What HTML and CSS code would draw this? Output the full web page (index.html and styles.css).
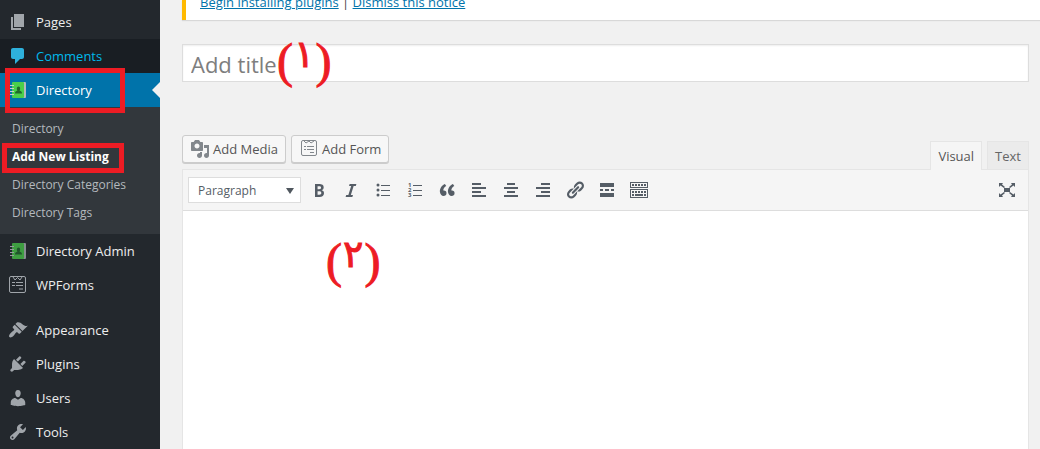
FILE: index.html
```html
<!DOCTYPE html>
<html lang="en">
<head>
    <meta charset="UTF-8">
    <title>Add New Listing</title>
    <link rel="stylesheet" href="styles.css">
</head>
<body>
    <nav id="menu">
        <ul class="main">
            <li><a href="#"><svg viewBox="0 0 20 20"><path d="M6 15V2h10v13H6zm-1 1h8v2H3V5h2v11z"/></svg>Pages</a></li>
            <li class="hover"><a href="#"><svg viewBox="0 0 20 20"><path d="M5 2h9c1.1 0 2 .9 2 2v7c0 1.1-.9 2-2 2h-2l-5 5v-5H5c-1.1 0-2-.9-2-2V4c0-1.1.9-2 2-2z"/></svg>Comments</a></li>
            <li class="current">
                <a href="#" class="marked"><svg viewBox="0 0 20 20" class="book"><path class="back" d="M6 2h11q1 0 1 1v14q0 1-1 1H6z"/><path class="cover" d="M5 2h10q1 0 1 1v14q0 1-1 1H5q-1 0-1-1V3q0-1 1-1z"/><path class="rings" d="M2 5.5h4M2 8.500h4M2 11.500h4M2 14.500h4"/><path class="person" d="M7 13.500c0-2 1-2.500 2.500-3-1-1-1-4 1-4s2 3 1 4c1.500.5 2.500 1 2.500 3z"/></svg>Directory</a>
                <ul class="sub">
                    <li><a href="#">Directory</a></li>
                    <li><a href="#" class="on marked">Add New Listing</a></li>
                    <li><a href="#">Directory Categories</a></li>
                    <li><a href="#">Directory Tags</a></li>
                </ul>
            </li>
            <li><a href="#"><svg viewBox="0 0 20 20" class="book dim"><path class="back" d="M6 2h11q1 0 1 1v14q0 1-1 1H6z"/><path class="cover" d="M5 2h10q1 0 1 1v14q0 1-1 1H5q-1 0-1-1V3q0-1 1-1z"/><path class="rings" d="M2 5.5h4M2 8.500h4M2 11.500h4M2 14.500h4"/><path class="person" d="M7 13.500c0-2 1-2.500 2.500-3-1-1-1-4 1-4s2 3 1 4c1.500.5 2.500 1 2.500 3z"/></svg>Directory Admin</a></li>
            <li><a href="#"><svg viewBox="0 0 20 20" class="form"><rect x="1.5" y="1.5" width="16" height="16" rx="1.5"/><path d="M5 2l2 3 2.500-2.500L12 5l2-3M4 7.500h3M8 7.500h7M4 10.500h3M8 10.500h7M11 14h4"/></svg>WPForms</a></li>
            <li class="group"><a href="#"><svg viewBox="0 0 20 20"><path d="M14.48 11.06L7.41 3.99l1.5-1.5c.5-.56 2.3-.47 3.51.32 1.21.8 1.43 1.28 2.91 2.1 1.18.64 2.45 1.26 4.45.85zm-.71.71L6.7 4.7 4.93 6.47c-.39.39-.39 1.02 0 1.41l1.06 1.06c.39.39.39 1.03 0 1.42-.6.6-1.43 1.11-2.21 1.69-.35.26-.7.53-1.01.84C1.43 14.23.4 16.08 1.4 17.07c.99 1 2.84-.03 4.18-1.36.31-.31.58-.66.85-1.02.57-.78 1.08-1.61 1.69-2.21.39-.39 1.02-.39 1.41 0l1.06 1.06c.39.39 1.02.39 1.41 0z"/></svg>Appearance</a></li>
            <li><a href="#"><svg viewBox="0 0 20 20"><path d="M13.11 4.36L9.87 7.6 8 5.73l3.24-3.24c.35-.34 1.05-.2 1.56.32.52.51.66 1.21.31 1.55zm-8 1.77l.91-1.12 9.01 9.01-1.19.84c-.71.71-2.63 1.16-3.82 1.16H6.14L4.9 17.26c-.59.59-1.54.59-2.12 0-.59-.58-.59-1.53 0-2.12l1.24-1.24v-3.88c0-1.13.4-3.19 1.09-3.89zm7.26 3.97l3.24-3.24c.34-.35 1.04-.21 1.55.31.52.51.66 1.21.31 1.55l-3.24 3.25z"/></svg>Plugins</a></li>
            <li><a href="#"><svg viewBox="0 0 20 20"><path d="M10 9.25c-2.27 0-2.73-3.44-2.73-3.44C7 4.02 7.82 2 9.97 2c2.16 0 2.98 2.02 2.71 3.81 0 0-.41 3.44-2.68 3.44zm0 2.57L12.72 10c2.39 0 4.52 2.33 4.52 4.53v2.49s-3.65 1.13-7.24 1.13c-3.65 0-7.24-1.13-7.24-1.13v-2.49c0-2.25 1.94-4.48 4.47-4.48z"/></svg>Users</a></li>
            <li><a href="#"><svg viewBox="0 0 20 20"><path d="M16.68 9.77c-1.34 1.34-3.3 1.67-4.95.99l-5.41 6.52c-.99.99-2.59.99-3.58 0s-.99-2.59 0-3.57l6.52-5.42c-.68-1.65-.35-3.61.99-4.95 1.28-1.28 3.12-1.62 4.72-1.06l-2.89 2.89 2.82 2.82 2.86-2.87c.53 1.58.18 3.39-1.08 4.65zM3.81 16.21c.4.39 1.04.39 1.43 0 .4-.4.4-1.04 0-1.43-.39-.4-1.03-.4-1.43 0-.39.39-.39 1.03 0 1.43z"/></svg>Tools</a></li>
        </ul>
    </nav>
    <main id="content">
        <div class="notice"><a href="#">Begin installing plugins</a> | <a href="#">Dismiss this notice</a></div>
        <form id="post">
            <div class="title">
                <input type="text" placeholder="Add title" aria-label="Add title">
                <div class="note note1"><span>(</span><b>١</b><span>)</span></div>
            </div>
            <div class="tools">
                <div class="media">
                    <button type="button"><svg viewBox="0 0 20 20"><path d="M13 11V4c0-.55-.45-1-1-1h-1.67L9 1H5L3.67 3H2c-.55 0-1 .45-1 1v7c0 .55.45 1 1 1h10c.55 0 1-.45 1-1zM7 4.5c1.38 0 2.5 1.12 2.5 2.5S8.38 9.5 7 9.5 4.5 8.38 4.5 7 5.62 4.5 7 4.5zM14 6h5v10.5c0 1.38-1.12 2.5-2.5 2.5S14 17.88 14 16.5s1.12-2.5 2.5-2.5c.17 0 .34.02.5.05V9h-3V6zm-4 8.05V13h2v3.5c0 1.38-1.12 2.5-2.5 2.5S7 17.88 7 16.5 8.12 14 9.5 14c.17 0 .34.02.5.05z"/></svg>Add Media</button>
                    <button type="button"><svg viewBox="0 0 20 20" class="form"><rect x="2.5" y="1.5" width="15" height="15" rx="1.5"/><path d="M5 2l2 2 3-2 2 2 3-2M5 7.500h2M8 7.500h7M5 10.500h2M8 10.500h7M11 13.500h4"/></svg>Add Form</button>
                </div>
                <div class="tabs">
                    <button type="button" class="active">Visual</button>
                    <button type="button">Text</button>
                </div>
            </div>
            <div class="editor">
                <div class="toolbar">
                    <div class="format">
                        <select aria-label="Format"><option>Paragraph</option></select>
                    </div>
                    <button type="button" title="Bold"><svg viewBox="0 0 20 20"><path d="M6 4v13h4.54c1.37 0 2.46-.33 3.26-1 .8-.66 1.2-1.58 1.2-2.77 0-.84-.17-1.51-.51-2.01s-.9-.85-1.67-1.03v-.09c.57-.1 1.02-.4 1.36-.9s.51-1.13.51-1.91c0-1.14-.39-1.98-1.17-2.5C12.75 4.26 11.5 4 9.78 4H6zm2.57 5.15V6.26h1.36c.73 0 1.27.11 1.61.32.34.22.51.58.51 1.07 0 .54-.16.92-.47 1.15s-.82.35-1.51.35h-1.5zm0 2.19h1.6c1.44 0 2.16.53 2.16 1.61 0 .6-.17 1.05-.51 1.34s-.86.43-1.57.43H8.57v-3.38z"/></svg></button>
                    <button type="button" title="Italic"><svg viewBox="0 0 20 20"><path d="M14.78 6h-2.13l-2.8 9h2.12l-.62 2H4.6l.62-2h2.14l2.8-9H8.03l.62-2h6.75z"/></svg></button>
                    <button type="button" title="Bulleted list"><svg viewBox="0 0 20 20"><circle cx="5" cy="5" r="1.5"/><circle cx="5" cy="10" r="1.5"/><circle cx="5" cy="15" r="1.5"/><path d="M8 5h9v1H8zM8 10h9v1H8zM8 15h9v1H8z"/></svg></button>
                    <button type="button" title="Numbered list"><svg viewBox="0 0 20 20"><text x="3" y="7">1</text><text x="3" y="12">2</text><text x="3" y="17">3</text><path d="M8 5h9v1H8zM8 10h9v1H8zM8 15h9v1H8z"/></svg></button>
                    <button type="button" title="Blockquote"><svg viewBox="0 0 20 20"><path d="M9.49 13.22c0-.74-.2-1.38-.61-1.9-.62-.78-1.83-.88-2.53-.72-.29-1.65 1.11-3.75 2.92-4.65L7.88 4c-2.73 1.3-5.42 4.28-4.96 8.05C3.21 14.43 4.59 16 6.54 16c.85 0 1.56-.25 2.12-.75s.83-1.18.83-2.03zm8.05 0c0-.74-.2-1.38-.61-1.9-.63-.78-1.83-.88-2.53-.72-.29-1.65 1.11-3.75 2.92-4.65L15.93 4c-2.73 1.3-5.41 4.28-4.95 8.05.29 2.38 1.66 3.95 3.61 3.95.85 0 1.56-.25 2.12-.75s.83-1.18.83-2.03z"/></svg></button>
                    <button type="button" title="Align left"><svg viewBox="0 0 20 20"><path d="M12 5V3H3v2h9zm5 4V7H3v2h14zm-5 4v-2H3v2h9zm5 4v-2H3v2h14z"/></svg></button>
                    <button type="button" title="Align center"><svg viewBox="0 0 20 20"><path d="M14 5V3H6v2h8zm3 4V7H3v2h14zm-3 4v-2H6v2h8zm3 4v-2H3v2h14z"/></svg></button>
                    <button type="button" title="Align right"><svg viewBox="0 0 20 20"><path d="M17 5V3H8v2h9zm0 4V7H3v2h14zm0 4v-2H8v2h9zm0 4v-2H3v2h14z"/></svg></button>
                    <button type="button" title="Insert link"><svg viewBox="0 0 20 20"><path d="M17.74 2.76c1.68 1.69 1.68 4.41 0 6.1l-1.53 1.52c-1.12 1.12-2.7 1.47-4.14 1.09l2.62-2.61.76-.77.76-.76c.84-.84.84-2.2 0-3.04-.84-.85-2.2-.85-3.04 0l-.77.76-3.38 3.38c-.37-1.44-.02-3.02 1.1-4.14l1.52-1.53c1.69-1.68 4.42-1.68 6.1 0zM8.59 13.43l5.34-5.34c.42-.42.42-1.1 0-1.52-.44-.43-1.13-.39-1.53 0l-5.33 5.34c-.42.42-.42 1.1 0 1.52.44.43 1.13.39 1.52 0zm-.76 2.29l4.14-4.15c.38 1.44.03 3.02-1.09 4.14l-1.52 1.53c-1.69 1.68-4.41 1.68-6.1 0-1.68-1.68-1.68-4.42 0-6.1l1.53-1.52c1.12-1.12 2.7-1.47 4.14-1.1l-4.14 4.15c-.85.84-.85 2.2 0 3.05.84.84 2.2.84 3.04 0z"/></svg></button>
                    <button type="button" title="Read more"><svg viewBox="0 0 20 20"><path d="M17 7V3H3v4h14zM6 11V9H3v2h3zm6 0V9H8v2h4zm5 0V9h-3v2h3zm0 6v-4H3v4h14z"/></svg></button>
                    <button type="button" title="Toolbar toggle"><svg viewBox="0 0 20 20"><path fill-rule="evenodd" d="M1 2h18v6H1zM2 3v4h16V3zM1 9h18v9H1zM2 10v7h16v-7z"/><path d="M3 4h2v2H3zM6 4h2v2H6zM9 4h2v2H9zM12 4h2v2h-2zM15 4h2v2h-2zM3 11h2v2H3zM6 11h2v2H6zM9 11h2v2H9zM12 11h2v2h-2zM15 11h2v2h-2zM3 14h2v2H3zM6 14h8v2H6zM15 14h2v2h-2z"/></svg></button>
                    <button type="button" title="Fullscreen" class="full"><svg viewBox="0 0 20 20"><path d="M7 8h6v4H7zM2 3h4L5 4.500 8 7 7 8 3.500 5.500 2 7zM18 3h-4l1 1.500L12 7l1 1 3.500-2.500L18 7zM2 17h4l-1-1.500L8 13l-1-1-3.500 2.500L2 13zM18 17h-4l1-1.500L12 13l1-1 3.500 2.500L18 13z"/></svg></button>
                </div>
                <textarea aria-label="Listing content"></textarea>
                <div class="note note2"><span>(</span><b>٢</b><span>)</span></div>
            </div>
        </form>
    </main>
</body>
</html>
```
FILE: styles.css
```css
*,*::before,*::after{
    margin: 0;
    padding: 0;
    box-sizing: border-box;
}
body{
    display: flex;
    height: 100vh;
    overflow: hidden;
    background: #f1f1f1;
    color: #444;
    font: 13px/20px "Open Sans", "Noto Sans", sans-serif;
}
ul{
    list-style: none;
}
a{
    color: #0073aa;
}
button,input,select,textarea{
    font: inherit;
    color: inherit;
}
svg{
    width: 20px;
    height: 20px;
    fill: currentColor;
    flex: none;
}

/* admin menu */
#menu{
    width: 160px;
    flex: none;
    padding-top: 5px;
    background: #23282d;
}
#menu a{
    display: flex;
    align-items: center;
    position: relative;
    color: #eee;
    text-decoration: none;
}
.main > li > a{
    height: 34px;
    padding-left: 8px;
    gap: 8px;
}
.main > li > a svg{
    color: #a0a5aa;
}
.main .group{
    margin-top: 11px;
}
.main .hover{
    background: #191e23;
}
#menu .hover a{
    color: #00b9eb;
}
#menu .hover svg{
    color: #2eb1dc;
}
#menu .current > a{
    background: #0073aa;
    color: #fff;
}
/* arrow pointing at the page */
.current > a::before{
    content: "";
    position: absolute;
    right: 0;
    top: 9px;
    border: 8px solid transparent;
    border-right-color: #f1f1f1;
    border-left: 0;
}
.sub{
    padding: 8px 0 7px;
    background: #32373c;
}
#menu .sub a{
    height: 28px;
    padding-left: 12px;
    font-size: 12px;
    color: #b4b9be;
}
#menu .sub a.on{
    color: #fff;
    font-weight: bold;
}
.marked::after{
    content: "";
    position: absolute;
    border: 5px solid #ed1c24;
    top: -5px;
    bottom: -6px;
    left: 5px;
    width: 120px;
    z-index: 2;
}
.sub .marked::after{
    top: 0;
    bottom: -2px;
    left: 2px;
    width: 122px;
}
.book .back{
    fill: #b4b9be;
}
.book .cover{
    fill: #4ad04a;
}
.book .rings{
    stroke: #c8ccd0;
    stroke-width: 1;
}
.book .person{
    fill: #1f6b2b;
}
.book.dim{
    opacity: .7;
}
.form{
    fill: none;
    stroke: currentColor;
}

/* page */
#content{
    flex: 1;
    min-width: 0;
    padding-left: 22px;
    display: flex;
    flex-direction: column;
}
.notice{
    height: 20px;
    flex: none;
    padding-left: 14px;
    border-left: 4px solid #ffb900;
    background: #fff;
    line-height: 4px;
    box-shadow: 0 1px 1px rgba(0,0,0,.1);
}
#post{
    flex: 1;
    display: flex;
    flex-direction: column;
    padding: 24px 11px 0 0;
}
.title{
    position: relative;
}
.title input{
    display: block;
    width: 100%;
    height: 38px;
    padding: 4px 8px 2px;
    border: 1px solid #ddd;
    background: #fff;
    box-shadow: inset 0 1px 2px rgba(0,0,0,.07);
    font-size: 22px;
}
.title input::placeholder{
    color: #7e7e7e;
}
.tools{
    display: flex;
    justify-content: space-between;
    align-items: flex-end;
    margin-top: 53px;
}
.media{
    display: flex;
    gap: 5px;
    padding-bottom: 6px;
}
.media button{
    display: flex;
    align-items: center;
    gap: 3px;
    height: 28px;
    padding: 0 7px;
    border: 1px solid #ccc;
    border-radius: 3px;
    background: #f7f7f7;
    box-shadow: 0 1px 0 #ccc;
    color: #555;
}
.media svg{
    color: #82878c;
}
.tabs{
    display: flex;
    gap: 5px;
    align-items: flex-end;
}
.tabs button{
    height: 28px;
    padding: 0 7px;
    border: 1px solid #e5e5e5;
    border-bottom: 0;
    background: #ebebeb;
    color: #666;
}
.tabs .active{
    background: #f5f5f5;
    color: #555;
    /* covers the editor border */
    position: relative;
    z-index: 1;
    margin-bottom: -1px;
    height: 29px;
}
.editor{
    flex: 1;
    display: flex;
    flex-direction: column;
    position: relative;
    border: 1px solid #e5e5e5;
    border-bottom: 0;
    background: #fff;
}
.toolbar{
    display: flex;
    align-items: center;
    height: 41px;
    padding: 0 5px;
    border-bottom: 1px solid #ddd;
    background: #f5f5f5;
}
.format{
    position: relative;
    margin-right: 2px;
}
.format::after{
    content: "";
    position: absolute;
    right: 7px;
    top: 11px;
    border: 4px solid transparent;
    border-top: 6px solid #50575e;
    border-bottom: 0;
    pointer-events: none;
}
.format select{
    display: block;
    appearance: none;
    width: 113px;
    height: 26px;
    padding: 2px 9px 0;
    border: 1px solid #ddd;
    background: #fff;
    font-size: 12px;
    color: #555d66;
}
.toolbar button{
    display: flex;
    justify-content: center;
    align-items: center;
    width: 32px;
    height: 28px;
    border: 0;
    background: none;
    color: #555d66;
}
.toolbar text{
    font-size: 6px;
    font-weight: bold;
}
.toolbar .full{
    margin-left: auto;
}
textarea{
    flex: 1;
    width: 100%;
    padding: 10px;
    border: 0;
    resize: none;
}

/* red step numbers */
.note{
    position: absolute;
    display: flex;
    gap: 1px;
    color: #ed1c24;
    font: 48px/48px "Liberation Serif", "DejaVu Sans", serif;
    -webkit-text-stroke: 1px #ed1c24;
    pointer-events: none;
}
.note b{
    font: 38px/34px "DejaVu Sans", sans-serif;
}
.note1{
    left: 95px;
    top: -7px;
}
.note2{
    left: 143px;
    top: 67px;
}
```
